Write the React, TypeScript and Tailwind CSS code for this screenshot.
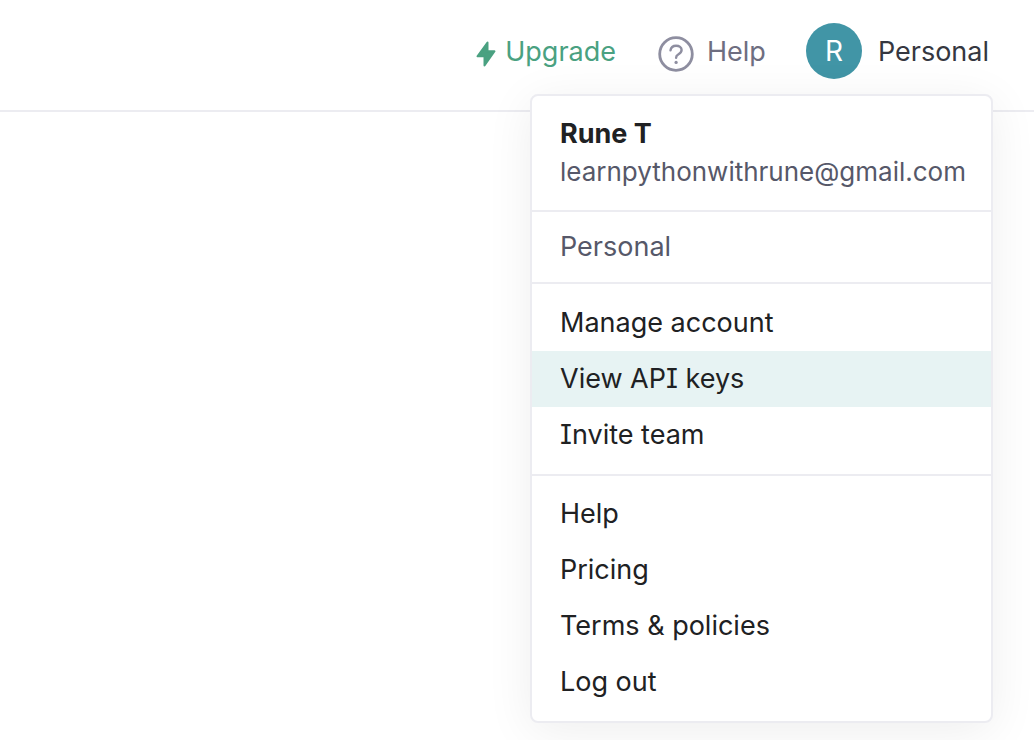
import React from "react";

const accountItems = [
  { label: "Manage account", href: "#account", active: false },
  { label: "View API keys", href: "#api-keys", active: true },
  { label: "Invite team", href: "#team", active: false },
];

const supportItems = [
  { label: "Help", href: "#help", active: false },
  { label: "Pricing", href: "#pricing", active: false },
  { label: "Terms & policies", href: "#terms", active: false },
  { label: "Log out", href: "#logout", active: false },
];

type Item = { label: string; href: string; active: boolean };

function MenuGroup({ items }: { items: Item[] }) {
  return (
    <ul className="text-[#202123]">
      {items.map((item) => (
        <li key={item.label}>
          <a
            href={item.href}
            className={
              item.active
                ? "flex h-14 items-center bg-[#e7f3f3] px-7"
                : "flex h-14 items-center px-7 hover:bg-[#e7f3f3]"
            }
          >
            {item.label}
          </a>
        </li>
      ))}
    </ul>
  );
}

function BoltIcon() {
  return (
    <svg viewBox="0 0 20 26" className="mt-1 h-[26px] w-5" fill="#4aa181" stroke="#4aa181" strokeWidth="2" strokeLinejoin="round" aria-hidden="true">
      <path d="M11.500 1.500 1.500 15.300H8.500V24.500L18.500 10.200H11.500z" />
    </svg>
  );
}

function HelpIcon() {
  return (
    <svg viewBox="0 0 36 36" className="mt-1 h-9 w-9" fill="none" stroke="#8e8ea0" aria-hidden="true">
      <circle cx="18" cy="18" r="16.300" strokeWidth="2.800" />
      <path d="M12.500 14.300c.4-2.900 2.700-4.600 5.600-4.600 3.200 0 5.500 1.800 5.500 4.400 0 2.300-1.600 3.400-3.400 4.400-1.600.9-2.100 1.600-2.100 3.300" strokeWidth="2.400" strokeLinecap="round" />
      <circle cx="18.100" cy="26.400" r="1.600" fill="#8e8ea0" stroke="none" />
    </svg>
  );
}

export default function App() {
  return (
    <div className="min-h-screen bg-white font-['Inter','Liberation_Sans',sans-serif] text-[27px] leading-9 [font-feature-settings:'cv08']">
      <header className="flex h-28 items-start justify-end border-b-2 border-[#ececf1] pt-[23px] pr-[45px]">
        <nav className="flex h-14 items-center">
          <a href="#upgrade" className="mr-[42px] flex items-center gap-[9px] pt-0.5 text-[#4aa181]">
            <BoltIcon />
            Upgrade
          </a>
          <a href="#help" className="mr-10 flex items-center gap-[13px] pt-0.5 text-[#6e6e80]">
            <HelpIcon />
            Help
          </a>
          <div className="relative">
            <button type="button" aria-expanded="true" className="flex items-center gap-4 text-[#353740]">
              <span className="flex h-14 w-14 items-center justify-center rounded-full bg-[#4195a6] text-[28px] text-white">
                R
              </span>
              <span className="pt-0.5">Personal</span>
            </button>
            <div className="absolute top-full -right-1 mt-[15px] w-[463px] divide-y-2 divide-[#ececf1] rounded-lg border-2 border-[#ececf1] bg-white shadow-[0_8px_48px_rgba(0,0,0,0.07)]">
              <div className="px-7 pt-5 pb-5">
                <div className="font-bold text-[#202123]">Rune T</div>
                <div className="mt-0.5 text-[26px] text-[#565869]">learnpythonwithrune@gmail.com</div>
              </div>
              <div className="px-7 py-[17px] text-[#565869]">Personal</div>
              <div className="py-[11px]">
                <MenuGroup items={accountItems} />
              </div>
              <div className="pt-2.5 pb-[11px]">
                <MenuGroup items={supportItems} />
              </div>
            </div>
          </div>
        </nav>
      </header>
    </div>
  );
}
